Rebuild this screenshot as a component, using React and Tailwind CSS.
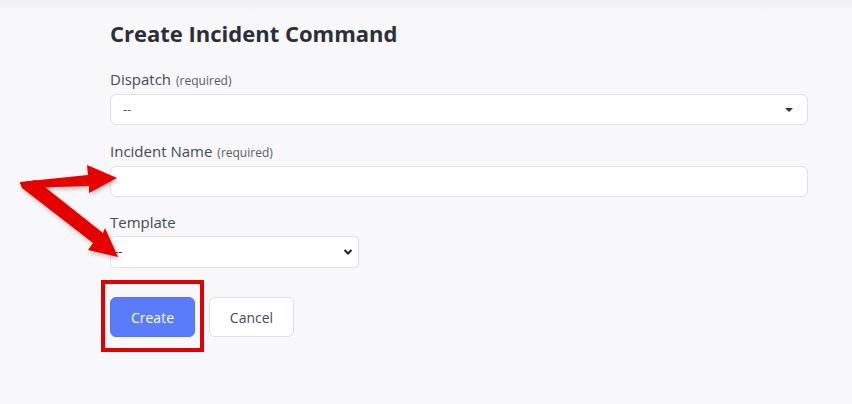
import React from "react";

const Label = ({ text, required }) => (
  <label className="block text-[15px] leading-[21px] text-[#444b55] mb-[3px]">
    {text}
    {required && <span className="ml-[5px] text-[12px] text-[#555c66]">(required)</span>}
  </label>
);

const Caret = () => (
  <svg width="10" height="6" viewBox="0 0 10 6" className="absolute right-[13px] top-1/2 -translate-y-1/2">
    <path d="M1 1h8L5 5z" fill="#333" />
  </svg>
);

const Chevron = () => (
  <svg width="10" height="8" viewBox="0 0 10 8" className="absolute right-[5px] top-1/2 -translate-y-1/2">
    <path d="M1.5 2L5 5.5 8.5 2" fill="none" stroke="#222" strokeWidth="2" />
  </svg>
);

export default function App() {
  return (
    <div
      className="relative min-h-screen h-[404px] overflow-hidden bg-[#f8f7fa]"
      style={{ fontFamily: "'Open Sans', 'Noto Sans', sans-serif" }}
    >
      {/* TOP SHADE */}
      <div className="absolute top-0 left-0 right-0 h-[12px] bg-gradient-to-b from-[#efeef1] to-transparent"></div>

      <div className="relative pl-[110px] pt-[18px] w-[808px]">
        {/* TITLE */}
        <h1 className="text-[22px] leading-[30px] font-bold text-[#2b2f36] mb-[21px]">
          Create Incident Command
        </h1>

        {/* DISPATCH */}
        <Label text="Dispatch" required />
        <div className="relative h-[31px] rounded-[6px] border border-[#dfe0e4] bg-white flex items-center pl-[12px] text-[13px] text-[#555]">
          --
          <Caret />
        </div>

        {/* INCIDENT NAME */}
        <div className="mt-[16px]">
          <Label text="Incident Name" required />
          <div className="h-[31px] rounded-[6px] border border-[#dfe0e4] bg-white"></div>
        </div>

        {/* TEMPLATE */}
        <div className="mt-[15px]">
          <Label text="Template" />
          <div className="relative w-[249px] h-[32px] rounded-[4px] border border-[#dfe0e4] bg-white flex items-center pl-[3px] text-[13px] text-[#333]">
            --
            <Chevron />
          </div>
        </div>

        {/* BUTTONS */}
        <div className="mt-[29px] flex items-center gap-[14px]">
          <div className="relative">
            <button className="h-[40px] w-[85px] rounded-[6px] bg-[#5a7cfa] text-white text-[14px] border border-[#5474f0]">
              Create
            </button>
            <div className="absolute left-[-9px] top-[-17px] w-[103px] h-[72px] border-[4px] border-[#e00000]"></div>
          </div>
          <button className="h-[40px] w-[85px] rounded-[6px] bg-white text-[#444b55] text-[14px] border border-[#dfe0e4]">
            Cancel
          </button>
        </div>
      </div>

      {/* ARROWS */}
      <svg width="852" height="404" className="absolute inset-0 pointer-events-none">
        <g fill="#e60000" stroke="none" style={{ filter: "drop-shadow(1px 2px 2px rgba(0,0,0,0.25))" }}>
          <polygon points="20,182 88,175 87,165 117,178 89,193 89,186 23,188" />
          <polygon points="20,183 36,180 103,233 105,228 118,257 88,250 93,243 22,188" />
        </g>
      </svg>
    </div>
  );
}
